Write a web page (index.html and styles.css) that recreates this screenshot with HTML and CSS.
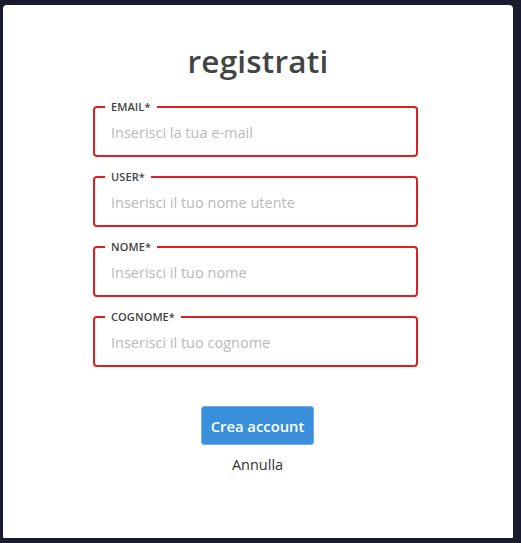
FILE: index.html
```html
<!DOCTYPE html>
<html lang="it">
<head>
<meta charset="utf-8">
<title>registrati</title>
<link rel="stylesheet" href="styles.css">
</head>
<body>
<main class="card">
  <h1 class="title">registrati</h1>
  <form class="form">
    <fieldset class="field">
      <legend class="field-label">EMAIL*</legend>
      <input class="field-input" type="email" placeholder="Inserisci la tua e-mail">
    </fieldset>
    <fieldset class="field">
      <legend class="field-label">USER*</legend>
      <input class="field-input" type="text" placeholder="Inserisci il tuo nome utente">
    </fieldset>
    <fieldset class="field">
      <legend class="field-label">NOME*</legend>
      <input class="field-input" type="text" placeholder="Inserisci il tuo nome">
    </fieldset>
    <fieldset class="field">
      <legend class="field-label">COGNOME*</legend>
      <input class="field-input" type="text" placeholder="Inserisci il tuo cognome">
    </fieldset>
    <div class="actions">
      <button class="btn-primary" type="button">Crea account</button>
      <a class="link-cancel" href="#">Annulla</a>
    </div>
  </form>
</main>
</body>
</html>
```

FILE: styles.css
```css
* { box-sizing: border-box; }
html, body { height: 100%; }
body {
  margin: 0;
  background: #181c2e;
  padding: 5px 8px 5px 3px;
  font-family: "Open Sans", "Noto Sans", sans-serif;
  color: #333;
}
.card {
  background: #fff;
  height: 533px;
  border-radius: 4px 4px 1px 1px;
  display: flex;
  flex-direction: column;
  align-items: center;
  padding-top: 36px;
}
.title {
  margin: 0;
  font-size: 31.5px;
  font-weight: 600;
  line-height: 40px;
  color: #444;
  letter-spacing: 0.2px;
}
.form {
  width: 325px;
  margin-top: 19px;
  margin-right: 5px;
  display: flex;
  flex-direction: column;
  gap: 13px;
}
.field {
  margin: 0;
  border: 2px solid #dd1f1f;
  border-radius: 4px;
  padding: 0 10px 4px;
  min-width: 0;
}
.field-label {
  padding: 0 6px;
  font-size: 11px;
  line-height: 14px;
  font-weight: 600;
  color: #444;
  letter-spacing: 0.1px;
}
.field-input {
  display: block;
  width: 100%;
  height: 37px;
  border: 0;
  outline: none;
  padding: 0 6px;
  font-family: inherit;
  font-size: 14.5px;
  color: #333;
  background: transparent;
}
.field-input::placeholder { color: #b9b9b9; opacity: 1; }
.actions {
  display: flex;
  flex-direction: column;
  align-items: center;
  margin-top: 26px;
  margin-left: 4px;
}
.btn-primary {
  width: 113px;
  height: 39px;
  background: #3a8fda;
  border: 1px solid #72aee6;
  border-radius: 3px;
  color: #fff;
  font-family: inherit;
  font-size: 14.8px;
  font-weight: 600;
  padding: 0;
}
.link-cancel {
  margin-top: 8px;
  font-size: 14.5px;
  line-height: 24px;
  color: #333;
  text-decoration: none;
}
```
